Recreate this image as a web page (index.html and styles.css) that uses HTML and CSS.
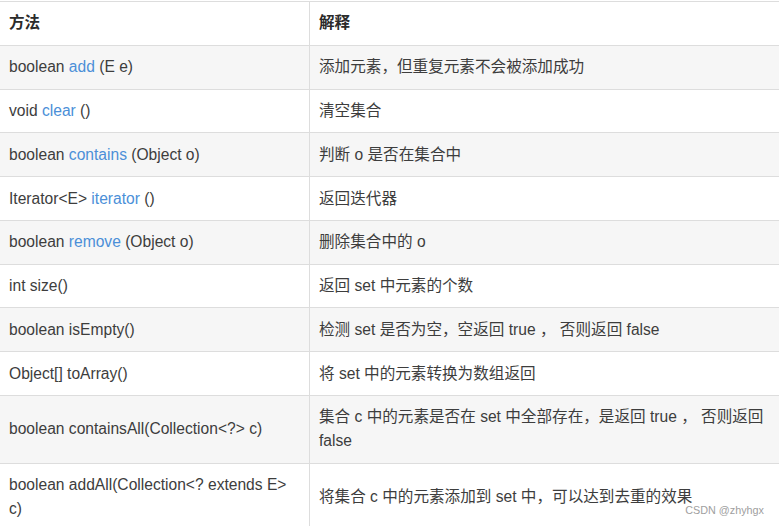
FILE: index.html
```html
<!DOCTYPE html>
<html lang="zh">
<head>
<meta charset="utf-8">
<link rel="stylesheet" href="styles.css">
</head>
<body>
<div class="page">
<table class="api">
  <thead>
    <tr><th class="col-method">方法</th><th>解释</th></tr>
  </thead>
  <tbody>
    <tr><td>boolean <span class="link">add</span> (E e)</td><td>添加元素，但重复元素不会被添加成功</td></tr>
    <tr><td>void <span class="link">clear</span> ()</td><td>清空集合</td></tr>
    <tr><td>boolean <span class="link">contains</span> (Object o)</td><td>判断 o 是否在集合中</td></tr>
    <tr><td>Iterator&lt;E&gt; <span class="link">iterator</span> ()</td><td>返回迭代器</td></tr>
    <tr><td>boolean <span class="link">remove</span> (Object o)</td><td>删除集合中的 o</td></tr>
    <tr><td>int size()</td><td>返回 set 中元素的个数</td></tr>
    <tr><td>boolean isEmpty()</td><td>检测 set 是否为空，空返回 true ， 否则返回 false</td></tr>
    <tr><td>Object[] toArray()</td><td>将 set 中的元素转换为数组返回</td></tr>
    <tr><td>boolean containsAll(Collection&lt;?&gt; c)</td><td>集合 c 中的元素是否在 set 中全部存在，是返回 true ， 否则返回 false</td></tr>
    <tr><td>boolean addAll(Collection&lt;? extends E&gt; c)</td><td>将集合 c 中的元素添加到 set 中，可以达到去重的效果</td></tr>
  </tbody>
</table>
<div class="watermark">CSDN @zhyhgx</div>
</div>
</body>
</html>
```

FILE: styles.css
```css
html, body {
  margin: 0;
  padding: 0;
  overflow: hidden;
  background: #fff;
}
.page {
  position: relative;
  width: 779px;
  height: 526px;
  overflow: hidden;
  padding-top: 1px;
  box-sizing: border-box;
}
.api {
  border-collapse: collapse;
  width: 792px;
  margin-left: -1px;
  font-family: "Liberation Sans", "Noto Sans CJK SC", sans-serif;
  font-size: 15.6px;
  line-height: 24px;
  color: #3d3d3d;
}
.api th, .api td {
  border: 1px solid #dddddd;
  padding: 9.4px 9px;
  text-align: left;
  vertical-align: middle;
}
.api th {
  font-weight: bold;
  color: #2b2b2b;
  background: #fff;
}
.col-method {
  width: 291px;
}
.api tbody tr:nth-child(odd) td {
  background: #f6f6f6;
}
.api tbody tr:nth-child(even) td {
  background: #fff;
}
.link {
  color: #4b8fd8;
}
.watermark {
  position: absolute;
  right: 15px;
  bottom: 10px;
  font-family: "Liberation Sans", sans-serif;
  font-size: 10.8px;
  color: #a0a0a0;
}
```
